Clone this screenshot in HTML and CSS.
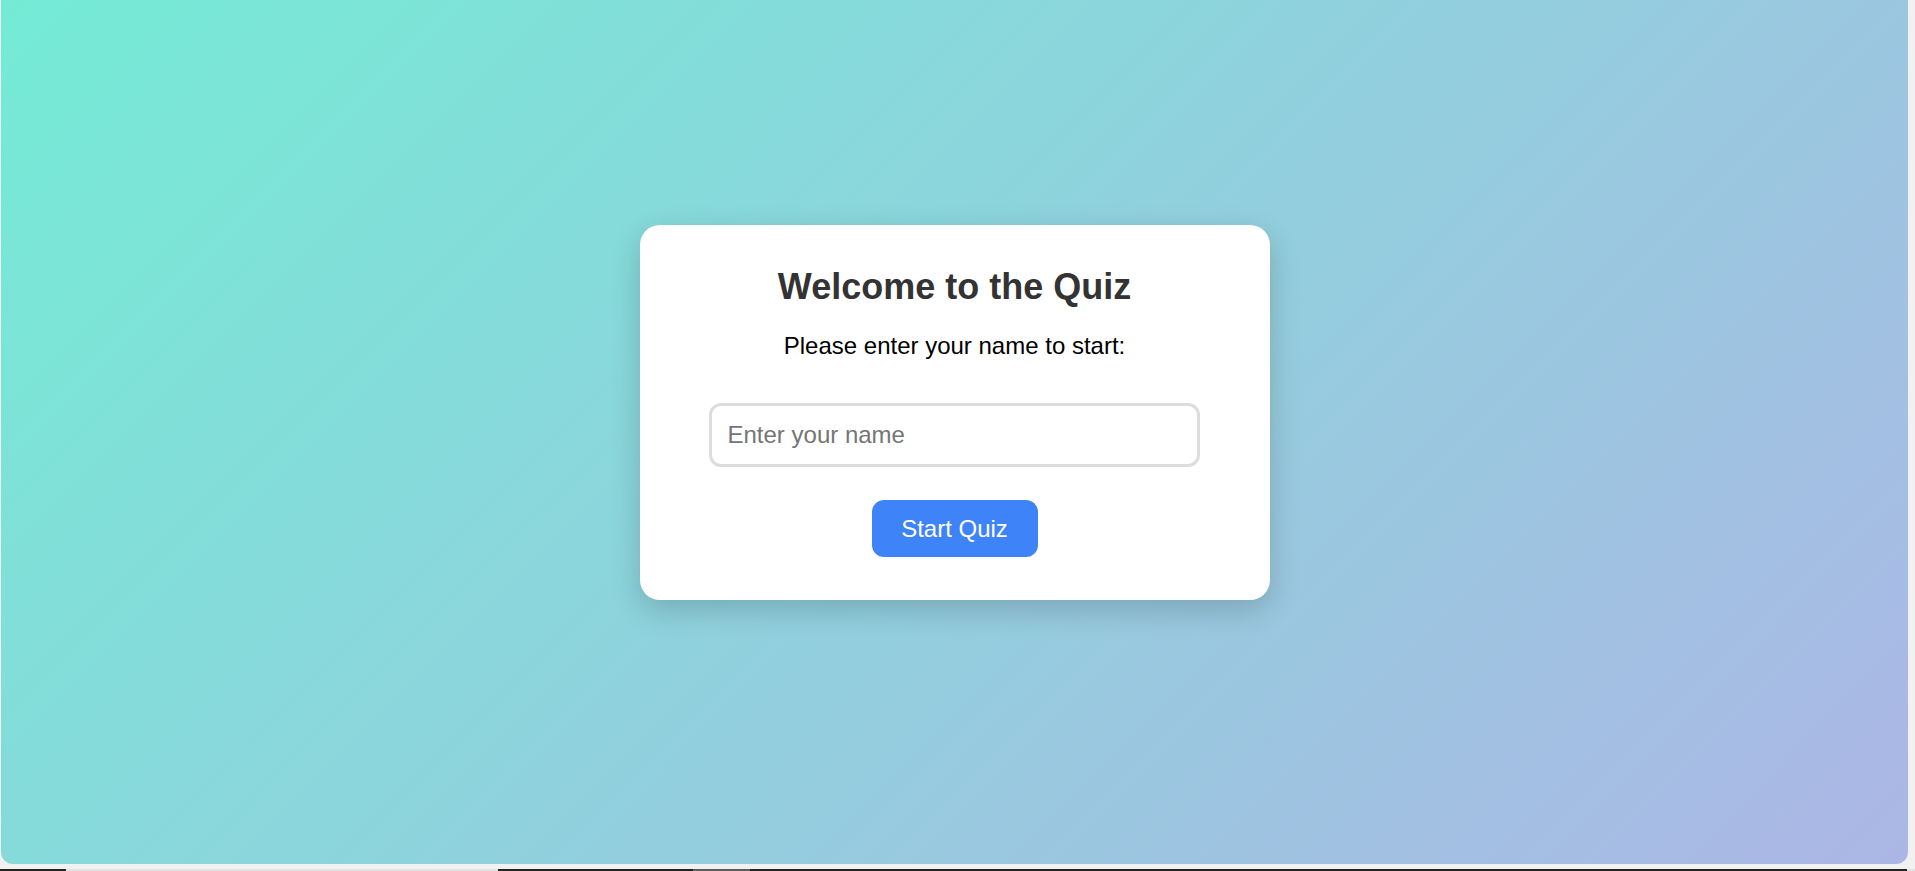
FILE: index.html
```html
<!DOCTYPE html>
<html lang="en">
<head>
<meta charset="utf-8">
<title>Quiz</title>
<link rel="stylesheet" href="styles.css">
</head>
<body>
<div class="window">
  <main class="stage">
    <section class="card">
      <h1 class="title">Welcome to the Quiz</h1>
      <p class="prompt">Please enter your name to start:</p>
      <input class="name-input" type="text" placeholder="Enter your name">
      <button class="start-btn" type="button">Start Quiz</button>
    </section>
  </main>
  <div class="strip">
    <span class="seg seg-dark seg-a"></span>
    <span class="seg seg-light seg-b"></span>
    <span class="seg seg-dark seg-c"></span>
    <span class="seg seg-mid seg-d"></span>
    <span class="seg seg-dark seg-e"></span>
    <span class="seg seg-light seg-f"></span>
  </div>
</div>
</body>
</html>
```

FILE: styles.css
```css
* { box-sizing: border-box; }

html, body {
  margin: 0;
  padding: 0;
  height: 100%;
}

body {
  background: #f1f1f1;
  font-family: "Liberation Sans", Arial, sans-serif;
  overflow: hidden;
}

.window {
  display: flex;
  flex-direction: column;
  height: 871px;
}

.stage {
  height: 864px;
  margin: 0 7px 0 1px;
  border-radius: 0 0 12px 12px;
  background: linear-gradient(135deg, #74ebd5 0%, #acb6e5 100%);
  display: flex;
  flex-direction: column;
  align-items: center;
  padding-top: 225px;
}

.card {
  width: 630px;
  background: #ffffff;
  border-radius: 20px;
  box-shadow: 0 10px 30px rgba(0, 0, 0, 0.18);
  padding: 41px 45px 43px;
  display: flex;
  flex-direction: column;
  align-items: center;
  text-align: center;
}

.title {
  margin: 0 0 25px;
  font-size: 36px;
  font-weight: bold;
  color: #333333;
  line-height: 41px;
}

.prompt {
  margin: 0 0 43px;
  font-size: 24px;
  color: #000000;
  line-height: 28px;
}

.name-input {
  width: 491px;
  height: 64px;
  padding: 0 16px;
  border: 3px solid #dddddd;
  border-radius: 12px;
  font-family: "Liberation Sans", Arial, sans-serif;
  font-size: 24px;
  color: #333;
  outline: none;
  margin: 0 0 33px;
  margin-left: -1px;
}

.name-input::placeholder {
  color: #757575;
}

.start-btn {
  width: 166px;
  height: 57px;
  padding: 0;
  border: none;
  border-radius: 12px;
  background: #3e83f7;
  color: #ffffff;
  font-family: "Liberation Sans", Arial, sans-serif;
  font-size: 24px;
  white-space: nowrap;
  cursor: pointer;
}

.strip {
  margin-top: 5px;
  height: 2px;
  display: flex;
}

.seg { height: 2px; display: block; }
.seg-dark { background: #23241f; }
.seg-light { background: #e4e4e4; }
.seg-mid { background: #5c5c58; }
.seg-a { width: 66px; }
.seg-b { width: 432px; }
.seg-c { width: 195px; }
.seg-d { width: 57px; }
.seg-e { width: 1157px; }
.seg-f { flex: 1; }
```
